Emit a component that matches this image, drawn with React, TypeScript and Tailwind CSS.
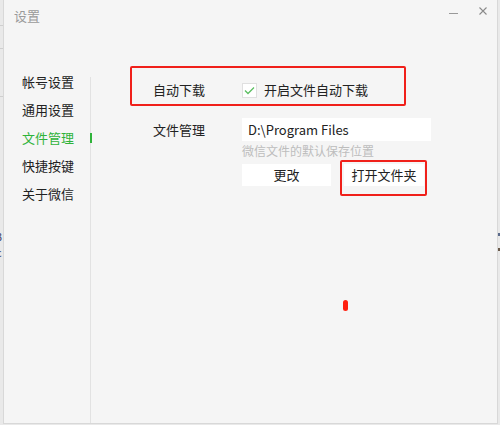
import React from "react";

const font = { fontFamily: '"Microsoft YaHei", "Noto Sans CJK SC", "Noto Sans", sans-serif' };

export default function App() {
  const items = ["帐号设置", "通用设置", "文件管理", "快捷按键", "关于微信"];
  return (
    <div className="w-[500px] h-[425px] bg-[#e9e9e9] relative overflow-hidden" style={font}>
      {/* background bits on left */}
      <div className="absolute left-0 top-[231px] text-[11px] leading-none text-[#3a3f6a]">
        <div className="-ml-[4px]">3</div>
        <div className="-ml-[4px] mt-[5px]">c</div>
      </div>
      <div className="absolute left-0 top-[25px] w-[3px] h-px bg-[#cfcfcf]" />
      <div className="absolute left-0 top-[48px] w-[3px] h-px bg-[#cfcfcf]" />
      <div className="absolute left-0 top-[96px] w-[3px] h-px bg-[#cfcfcf]" />
      <div className="absolute right-0 top-[233px] w-[2px] h-[3px] bg-[#5a6a8a]" />
      <div className="absolute right-0 top-[248px] w-[2px] h-[3px] bg-[#6a5a4a]" />

      <div className="absolute left-[3px] top-0 w-[495px] h-[424px] bg-[#f5f5f5] border-l border-r border-b border-[#d8d8d8] flex flex-col">
        {/* title bar */}
        <div className="h-[30px] flex items-start justify-between">
          <div className="pl-[10px] pt-[7px] text-[13px] leading-[18px] text-[#9a9a9a]">设置</div>
          <div className="flex items-center pt-[7px] pr-[10px]">
            <div className="w-[9px] h-px bg-[#999] mt-[4px]" />
            <svg className="ml-[21px]" width="8" height="8" viewBox="0 0 8 8">
              <path d="M0.5 0.5 L7.5 7.5 M7.5 0.5 L0.5 7.5" stroke="#8a8a8a" strokeWidth="1.1" />
            </svg>
          </div>
        </div>
        <div className="flex flex-1">
          {/* sidebar */}
          <div className="w-[87px] mt-[47px] border-r border-[#e2e2e2] relative">
            <div className="flex flex-col pl-[18px] -mt-[9px]">
              {items.map((t) => (
                <div
                  key={t}
                  className={
                    "h-[28px] flex items-center text-[13px] " +
                    (t === "文件管理" ? "text-[#2fb33a]" : "text-[#222]")
                  }
                >
                  {t}
                </div>
              ))}
            </div>
            <div className="absolute right-[-2px] top-[56px] w-[2px] h-[10px] bg-[#2fb33a]" />
          </div>
          {/* content */}
          <div className="flex-1 pl-[62px] pt-[50px] text-[13px] text-[#222]">
            <div className="flex items-center h-[20px]">
              <div className="w-[89px]">自动下载</div>
              <div className="w-[15px] h-[15px] bg-white border border-[#e0e0e0] flex items-center justify-center">
                <svg width="11" height="9" viewBox="0 0 11 9">
                  <path d="M1 4.5 L4 7.5 L10 1.5" stroke="#5cbf62" strokeWidth="1.3" fill="none" />
                </svg>
              </div>
              <div className="ml-[7px]">开启文件自动下载</div>
            </div>
            <div className="flex items-start mt-[18px]">
              <div className="w-[89px] h-[23px] flex items-center">文件管理</div>
              <div className="flex flex-col">
                <div className="w-[189px] h-[23px] bg-white flex items-center pl-[6px] text-[13px] text-[#222]">
                  D:\Program Files
                </div>
                <div className="text-[12px] leading-[16px] text-[#bdbdbd] mt-[2px]">微信文件的默认保存位置</div>
                <div className="flex mt-[5px] gap-[13px]">
                  <div className="w-[89px] h-[22px] bg-white flex items-center justify-center">更改</div>
                  <div className="w-[80px] h-[22px] bg-white flex items-center justify-center">打开文件夹</div>
                </div>
              </div>
            </div>
          </div>
        </div>
      </div>

      {/* red annotation boxes */}
      <div className="absolute left-[130px] top-[66px] w-[276px] h-[40px] border-2 border-[#f0201a] rounded-[2px]" />
      <div className="absolute left-[340px] top-[160px] w-[87px] h-[36px] border-2 border-[#f0201a] rounded-[2px]" />
      <div className="absolute left-[343px] top-[300px] w-[5px] h-[11px] bg-[#ff2010] rounded-full" />
    </div>
  );
}
